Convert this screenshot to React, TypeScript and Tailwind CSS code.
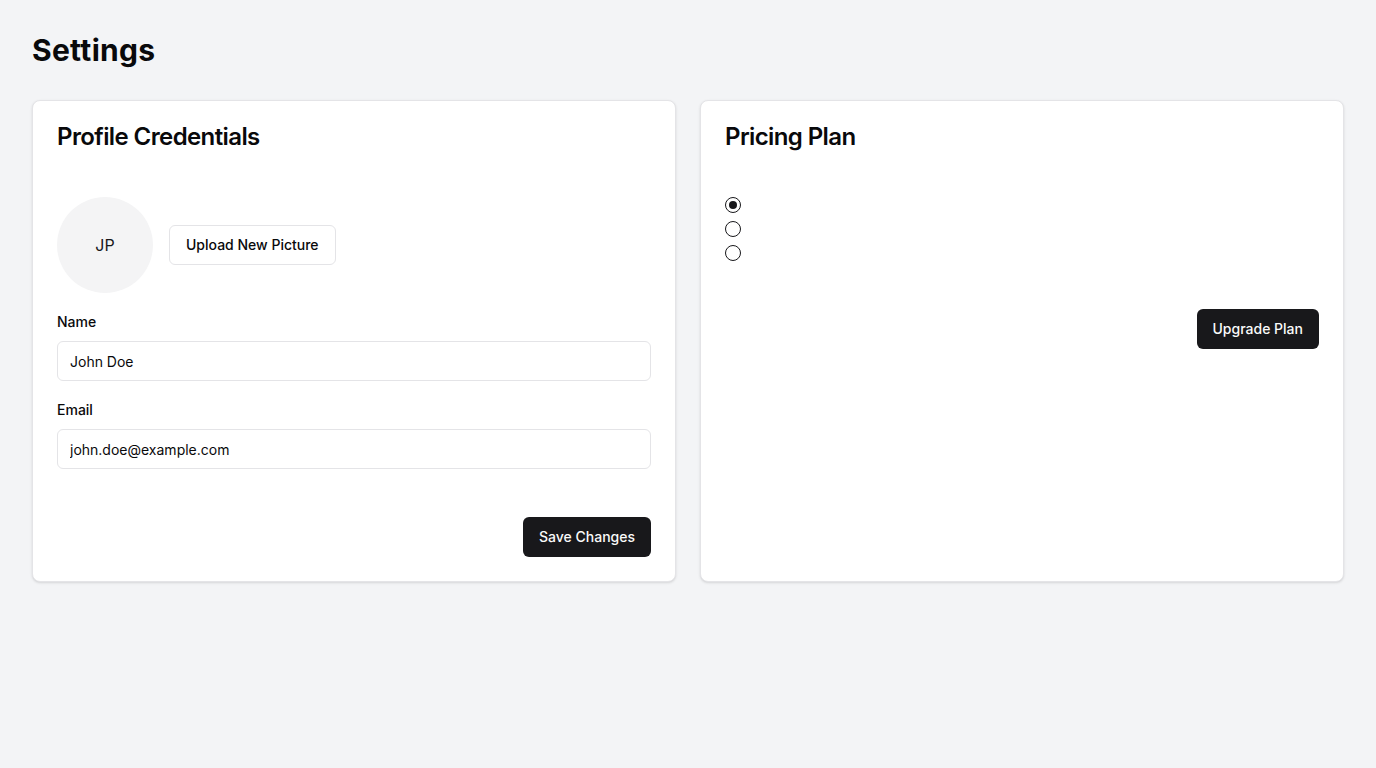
import React from "react";

export default function App() {
  return (
    <div
      className="min-h-screen bg-[#f3f4f6] p-8 text-[#09090b]"
      style={{ fontFamily: "Inter, 'Noto Sans', sans-serif" }}
    >
      <h1 className="text-3xl leading-9 font-bold tracking-[0.01em] mb-8">Settings</h1>
      <div className="grid grid-cols-2 gap-6">
        {/* Profile card */}
        <div className="rounded-lg border border-[#e4e4e7] bg-white shadow-sm">
          <div className="p-6 pb-12">
            <h2 className="text-2xl leading-none font-semibold tracking-tight">Profile Credentials</h2>
          </div>
          <div className="px-6 pb-6 flex flex-col">
            <div className="flex items-center gap-4">
              <div className="h-24 w-24 rounded-full bg-[#f4f4f5] flex items-center justify-center text-base text-[#18181b]">
                JP
              </div>
              <button className="h-10 px-4 rounded-md border border-[#e4e4e7] bg-white text-sm font-medium text-[#09090b]">
                Upload New Picture
              </button>
            </div>
            <label className="mt-[19px] text-sm leading-5 font-medium">Name</label>
            <input
              readOnly
              value="John Doe"
              className="mt-[9px] h-10 w-full rounded-md border border-[#e4e4e7] px-3 text-sm text-[#09090b] outline-none"
            />
            <label className="mt-[19px] text-sm leading-5 font-medium">Email</label>
            <input
              readOnly
              value="john.doe@example.com"
              className="mt-[9px] h-10 w-full rounded-md border border-[#e4e4e7] px-3 text-sm text-[#09090b] outline-none"
            />
            <div className="mt-12 flex justify-end">
              <button className="h-10 px-4 rounded-md bg-[#18181b] text-sm font-medium text-[#fafafa]">
                Save Changes
              </button>
            </div>
          </div>
        </div>

        {/* Pricing card */}
        <div className="rounded-lg border border-[#e4e4e7] bg-white shadow-sm">
          <div className="p-6 pb-12">
            <h2 className="text-2xl leading-none font-semibold tracking-tight">Pricing Plan</h2>
          </div>
          <div className="px-6 pb-6 flex flex-col">
            <div className="flex flex-col gap-2">
              <span className="h-4 w-4 rounded-full border border-[#18181b] flex items-center justify-center">
                <span className="h-2 w-2 rounded-full bg-[#18181b]" />
              </span>
              <span className="h-4 w-4 rounded-full border border-[#18181b]" />
              <span className="h-4 w-4 rounded-full border border-[#18181b]" />
            </div>
            <div className="mt-12 flex justify-end">
              <button className="h-10 px-4 rounded-md bg-[#18181b] text-sm font-medium text-[#fafafa]">
                Upgrade Plan
              </button>
            </div>
          </div>
        </div>
      </div>
    </div>
  );
}
